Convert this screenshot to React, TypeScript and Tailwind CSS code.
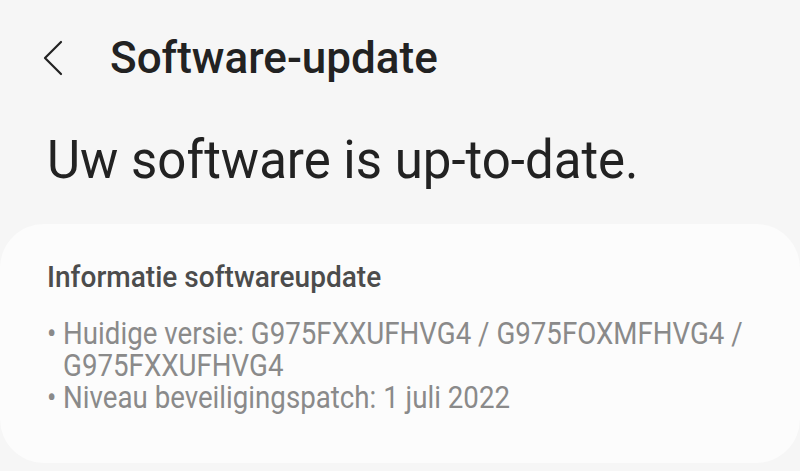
const FONT = { fontFamily: 'Roboto, "Noto Sans", sans-serif' }

export default function App() {
  return (
    <div className="w-[800px] h-[471px] overflow-hidden bg-[#f6f6f6]" style={FONT}>
      {/* Top bar */}
      <div className="flex items-center h-[44px] mt-[36px]">
        <svg viewBox="0 0 20 36" className="w-[20px] h-[36px] ml-[43px] text-[#222]" fill="none" stroke="currentColor" strokeWidth={2.2} strokeLinecap="round" strokeLinejoin="round">
          <path d="M18 2 L2 18 L18 34" />
        </svg>
        <h1 className="ml-[47px] text-[44px] leading-[44px] font-medium text-[#222]">Software-update</h1>
      </div>

      {/* Status */}
      <p className="mt-[54px] ml-[47px] text-[53px] leading-[53px] text-[#222] origin-left scale-x-[0.962]">Uw software is up-to-date.</p>

      {/* Info card */}
      <div className="mt-[37px] h-[239px] bg-[#fcfcfc] rounded-[44px] pt-[38px] pl-[47px]">
        <h2 className="text-[30px] leading-[30px] font-medium text-[#4c4c4c] origin-left scale-x-[0.935]">Informatie softwareupdate</h2>
        <ul className="mt-[26px] w-[830px] text-[31px] leading-[32px] text-[#8a8a8a] origin-left scale-x-[0.893]">
          <li className="flex">
            <span className="w-[18px] shrink-0">•</span>
            <span>Huidige versie: G975FXXUFHVG4 / G975FOXMFHVG4 / G975FXXUFHVG4</span>
          </li>
          <li className="flex">
            <span className="w-[18px] shrink-0">•</span>
            <span>Niveau beveiligingspatch: 1 juli 2022</span>
          </li>
        </ul>
      </div>
    </div>
  )
}
